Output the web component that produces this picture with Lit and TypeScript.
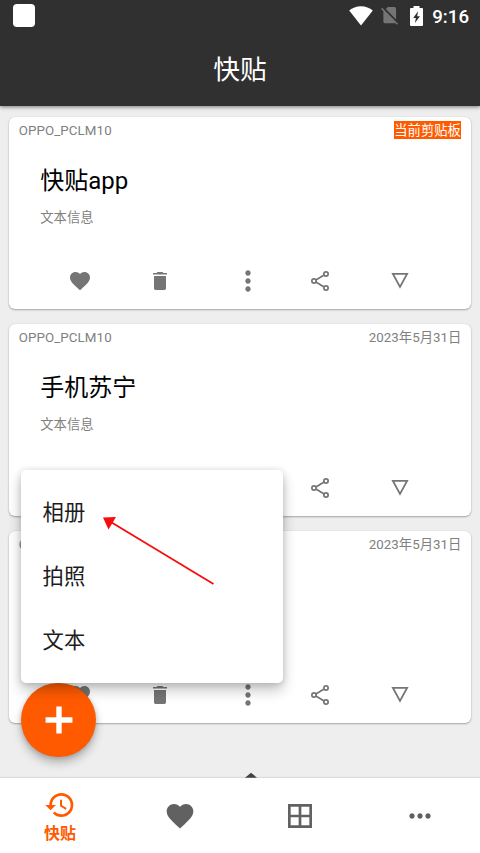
import { LitElement, html, css, svg, nothing } from "lit";
import { customElement, property } from "lit/decorators.js";

const HEART = "M12 21.35l-1.45-1.32C5.4 15.36 2 12.28 2 8.5 2 5.42 4.42 3 7.5 3c1.74 0 3.41.81 4.5 2.09C13.09 3.81 14.76 3 16.5 3 19.58 3 22 5.42 22 8.5c0 3.78-3.4 6.86-8.55 11.54L12 21.35z";

const ICONS = {
  heart: svg`<path d=${HEART} />`,
  trash: svg`<path d="M6 19.300c0 1 .7 1.700 1.700 1.700h8.600c1 0 1.700-.7 1.700-1.700V7H6v12.300zM19 4h-3.500l-1-1h-5l-1 1H5v1.600h14V4z" />`,
  moreVert: svg`<path d="M12 8c1.1 0 2-.9 2-2s-.9-2-2-2-2 .9-2 2 .9 2 2 2zm0 2c-1.1 0-2 .9-2 2s.9 2 2 2 2-.9 2-2-.9-2-2-2zm0 6c-1.1 0-2 .9-2 2s.9 2 2 2 2-.9 2-2-.9-2-2-2z" />`,
  moreHoriz: svg`<path d="M6 10c-1.1 0-2 .9-2 2s.9 2 2 2 2-.9 2-2-.9-2-2-2zm12 0c-1.1 0-2 .9-2 2s.9 2 2 2 2-.9 2-2-.9-2-2-2zm-6 0c-1.1 0-2 .9-2 2s.9 2 2 2 2-.9 2-2-.9-2-2-2z" />`,
  share: svg`<g fill="none" stroke="currentColor" stroke-width="1.7"><circle cx="18" cy="5" r="2.15" /><circle cx="6" cy="12" r="2.15" /><circle cx="18" cy="19" r="2.15" /><path d="M7.9 10.9 16.1 6.1M7.9 13.1l8.2 4.8" /></g>`,
  triangle: svg`<path fill="none" stroke="currentColor" stroke-width="1.8" d="M4.900 4.900h14.200L12 17.900z" />`,
  history: svg`<path d="M13 3a9 9 0 0 0-9 9H1l3.89 3.89.07.14L9 12H6c0-3.87 3.13-7 7-7s7 3.13 7 7-3.13 7-7 7c-1.93 0-3.68-.79-4.94-2.06l-1.42 1.42A8.954 8.954 0 0 0 13 21a9 9 0 0 0 0-18zm-1 5v5l4.28 2.54.72-1.21-3.5-2.08V8H12z" />`,
  grid: svg`<path d="M3 3v18h18V3H3zm8 16H5v-6h6v6zm0-8H5V5h6v6zm8 8h-6v-6h6v6zm0-8h-6V5h6v6z" />`,
  plus: svg`<path d="M19 13.400h-5.600V19h-2.800v-5.600H5v-2.800h5.600V5h2.800v5.600H19z" />`,
};

type IconName = keyof typeof ICONS;

const icon = (name: IconName, large = false) => html`
  <svg class=${large ? "icon large" : "icon"} viewBox="0 0 24 24" fill="currentColor">${ICONS[name]}</svg>
`;

@customElement("clip-card")
class ClipCard extends LitElement {
  @property() device = "";
  @property() date = "";
  @property() heading = "";
  @property() kind = "";
  @property({ type: Boolean }) current = false;

  static styles = css`
    :host {
      display: flex;
      flex-direction: column;
      box-sizing: border-box;
      height: 192.3px;
      background: #fff;
      border-radius: 6px;
      box-shadow: 0 1px 2px rgba(0, 0, 0, 0.3), 0 0 1px rgba(0, 0, 0, 0.16);
      color: #757575;
      font-size: 13.33px;
    }
    .meta {
      display: flex;
      justify-content: space-between;
      align-items: center;
      height: 20px;
      padding: 4px 9.3px 0 9.500px;
    }
    .device {
      letter-spacing: 0.08px;
      color: #808080;
      line-height: 18px;
    }
    .date {
      color: #808080;
      line-height: 18px;
      letter-spacing: 0.03px;
    }
    .badge {
      background: #ff5a00;
      color: #fff;
      line-height: 19px;
      height: 18px;
      padding: 0 0.5px;
      margin-top: -2px;
      white-space: nowrap;
    }
    .body {
      flex: 1;
      padding: 22px 31px 0;
    }
    .heading {
      color: #000;
      font-size: 24px;
      line-height: 36px;
    }
    .kind {
      margin-top: 9px;
      line-height: 20px;
      color: #808080;
    }
    .actions {
      display: grid;
      grid-template-columns: repeat(5, 80px);
      align-items: center;
      justify-items: center;
      height: 32px;
      padding: 0 0 12.3px 30.7px;
    }
    .icon {
      width: 24px;
      height: 24px;
      display: block;
    }
    .large {
      width: 32px;
      height: 32px;
      margin-left: 16px;
    }
  `;

  render() {
    return html`
      <div class="meta">
        <span class="device">${this.device}</span>
        <span class=${this.current ? "badge" : "date"}>${this.date}</span>
      </div>
      <div class="body">
        ${this.heading
          ? html`<div class="heading">${this.heading}</div><div class="kind">${this.kind}</div>`
          : nothing}
      </div>
      <div class="actions">
        ${icon("heart")} ${icon("trash")} ${icon("moreVert", true)} ${icon("share")} ${icon("triangle")}
      </div>
    `;
  }
}

@customElement("app-root")
class AppRoot extends LitElement {
  static styles = css`
    :host {
      display: flex;
      flex-direction: column;
      position: relative;
      width: 480px;
      height: 853px;
      overflow: hidden;
      background: #eee;
      font-family: Roboto, "Noto Sans CJK SC", sans-serif;
    }
    .top {
      height: 106.4px;
      flex: none;
      background: #303030;
      color: #fff;
      box-shadow: 0 1px 4px rgba(0, 0, 0, 0.5);
    }
    .status {
      display: flex;
      align-items: center;
      height: 32px;
      padding: 0 11px 0 13px;
    }
    .app-mark {
      width: 22px;
      height: 23px;
      border-radius: 4px;
      background: #fff;
      margin: 0 auto 1px 0;
    }
    .status svg {
      display: block;
    }
    .wifi {
      margin-right: 8px;
    }
    .sim {
      margin-right: 12px;
    }
    .battery {
      margin-right: 9px;
    }
    .clock {
      font-size: 18.67px;
      font-weight: 500;
      line-height: 32px;
      padding-top: 2px;
    }
    .title {
      height: 74px;
      line-height: 77px;
      text-align: center;
      font-size: 26.67px;
    }
    .list {
      flex: 1;
      display: flex;
      flex-direction: column;
      gap: 14.5px;
      padding: 10.7px 9.3px 0;
    }
    .nav {
      position: relative;
      display: grid;
      grid-template-columns: repeat(4, 1fr);
      height: 75.3px;
      flex: none;
      background: #fff;
      color: #616161;
      box-shadow: 0 -1px 1px rgba(0, 0, 0, 0.08);
    }
    .tab {
      display: flex;
      flex-direction: column;
      align-items: center;
      justify-content: center;
      padding-top: 1px;
    }
    .tab.active {
      color: #ff5a00;
      justify-content: flex-start;
      padding-top: 11.5px;
    }
    .label {
      font-size: 16px;
      font-weight: 700;
      line-height: 26px;
    }
    .icon {
      width: 32px;
      height: 32px;
      display: block;
    }
    .peak {
      position: absolute;
      left: 245px;
      bottom: 100%;
      width: 12px;
      height: 5px;
      background: #424242;
      clip-path: polygon(50% 0, 100% 100%, 0 100%);
    }
    .fab {
      position: absolute;
      left: 21.3px;
      top: 682.6px;
      width: 74.7px;
      height: 74.7px;
      border-radius: 50%;
      display: grid;
      place-items: center;
      background: #ff5a00;
      color: #fff;
      box-shadow: 0 6px 10px rgba(0, 0, 0, 0.24), 0 1px 4px rgba(0, 0, 0, 0.16);
    }
    .fab svg {
      width: 46px;
      height: 46px;
    }
    .menu {
      position: absolute;
      left: 21.3px;
      top: 469.6px;
      width: 261.4px;
      height: 213.4px;
      box-sizing: border-box;
      padding: 11px 0 10px 21.3px;
      border-radius: 5px;
      background: #fff;
      color: #1c1c1c;
      font-size: 21.33px;
      box-shadow: 0 7px 14px rgba(0, 0, 0, 0.24), 0 1px 6px rgba(0, 0, 0, 0.14);
    }
    .item {
      height: 64px;
      line-height: 64px;
    }
    .arrow {
      position: absolute;
      left: 100px;
      top: 512px;
    }
  `;

  render() {
    return html`
      <header class="top">
        <div class="status">
          <span class="app-mark"></span>
          <svg class="wifi" width="24" height="20" viewBox="0 0 24 20">
            <path fill="#fff" d="M12 19.5.2 4.6C3.2 2 7.4.3 12 .3s8.8 1.700 11.800 4.300z" />
          </svg>
          <svg class="sim" width="17" height="17.8" viewBox="2.38 3 18.74 19.62">
            <path fill="#757575" d="M18.99 5c0-1.1-.89-2-1.99-2h-7L7.66 5.34 19 16.68 18.99 5zM3.65 3.88L2.38 5.15 5 7.77V19c0 1.1.9 2 2 2h10.01c.35 0 .67-.1.96-.26l1.88 1.88 1.27-1.27L3.65 3.88z" />
          </svg>
          <svg class="battery" width="13" height="20" viewBox="0 0 13 20">
            <path fill="#fff" fill-rule="evenodd" d="M3.500 0h6v2H12q1 0 1 1v16q0 1-1 1H1q-1 0-1-1V3q0-1 1-1h2.500zM8 5.200 3.200 12h2.700l-1 5L10 10.200H7.200z" />
          </svg>
          <span class="clock">9:16</span>
        </div>
        <div class="title">快贴</div>
      </header>

      <main class="list">
        <clip-card device="OPPO_PCLM10" date="当前剪贴板" heading="快贴app" kind="文本信息" current></clip-card>
        <clip-card device="OPPO_PCLM10" date="2023年5月31日" heading="手机苏宁" kind="文本信息"></clip-card>
        <clip-card device="OPPO_PCLM10" date="2023年5月31日"></clip-card>
      </main>

      <nav class="nav">
        <span class="peak"></span>
        <div class="tab active">${icon("history")}<span class="label">快贴</span></div>
        <div class="tab">${icon("heart")}</div>
        <div class="tab">${icon("grid")}</div>
        <div class="tab">${icon("moreHoriz")}</div>
      </nav>

      <div class="fab">${icon("plus")}</div>
      <div class="menu">
        ${["相册", "拍照", "文本"].map((label) => html`<div class="item">${label}</div>`)}
      </div>
      <svg class="arrow" width="120" height="76" viewBox="0 0 120 76">
        <path d="M10 9.500 113.500 72" stroke="#f60d0d" stroke-width="1.800" />
        <path d="M3 5.500 16 5 8.500 17.500z" fill="#f60d0d" />
      </svg>
    `;
  }
}
